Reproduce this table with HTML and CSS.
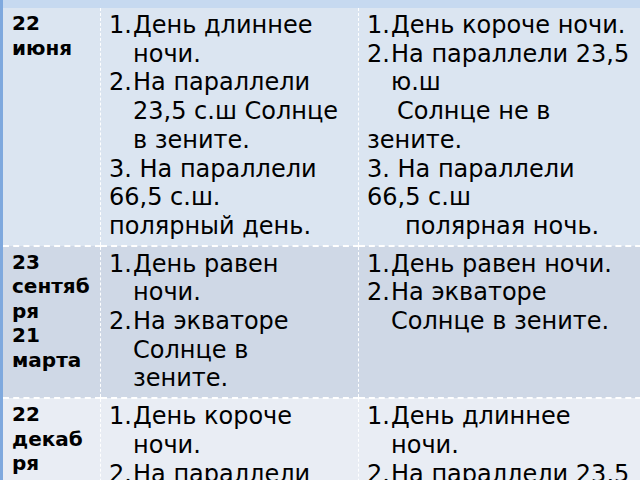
FILE: index.html
```html
<!DOCTYPE html>
<html lang="ru">
<head>
<meta charset="utf-8">
<title>Таблица</title>
<link rel="stylesheet" href="styles.css">
</head>
<body>
<div class="slide">
  <table class="grid">
    <tr class="r1">
      <td class="date"><p class="d">22 июня</p></td>
      <td class="c2">
        <ol class="list">
          <li><span class="n">1.</span><span>День длиннее ночи.</span></li>
          <li><span class="n">2.</span><span>На параллели 23,5 с.ш Солнце в зените.</span></li>
        </ol>
        <p class="para">3. На параллели 66,5 с.ш. полярный день.</p>
      </td>
      <td class="c3">
        <ol class="list">
          <li><span class="n">1.</span><span>День короче ночи.</span></li>
          <li><span class="n">2.</span><span>На параллели 23,5 ю.ш</span></li>
        </ol>
        <p class="para indent">Солнце не в<br>зените.</p>
        <p class="para">3. На параллели<br>66,5 с.ш<span class="shift">полярная ночь.</span></p>
      </td>
    </tr>
    <tr class="r2">
      <td class="date"><p class="d">23 сентября</p><p class="d">21 марта</p></td>
      <td class="c2">
        <ol class="list">
          <li><span class="n">1.</span><span>День равен ночи.</span></li>
          <li><span class="n">2.</span><span>На экваторе Солнце в зените.</span></li>
        </ol>
      </td>
      <td class="c3">
        <ol class="list">
          <li><span class="n">1.</span><span>День равен ночи.</span></li>
          <li><span class="n">2.</span><span>На экваторе Солнце в зените.</span></li>
        </ol>
      </td>
    </tr>
    <tr class="r3">
      <td class="date"><p class="d">22 декабря</p></td>
      <td class="c2">
        <ol class="list">
          <li><span class="n">1.</span><span>День короче ночи.</span></li>
          <li><span class="n">2.</span><span>На параллели 23,5 ю.ш Солнце в зените.</span></li>
        </ol>
        <p class="para">3. На параллели 66,5 ю.ш. полярный день.</p>
      </td>
      <td class="c3">
        <ol class="list">
          <li><span class="n">1.</span><span>День длиннее ночи.</span></li>
          <li><span class="n">2.</span><span>На параллели 23,5 с.ш Солнце не в зените.</span></li>
        </ol>
        <p class="para">3. На параллели 66,5 с.ш полярная ночь.</p>
      </td>
    </tr>
  </table>
</div>
</body>
</html>
```

FILE: styles.css
```css
html, body {
  margin: 0;
  padding: 0;
  width: 640px;
  height: 480px;
  overflow: hidden;
  background: #c6d9f0;
}

.slide {
  border-left: 3px solid #7fa9de;
  padding-top: 8px;
  height: 472px;
  font-family: "DejaVu Sans", sans-serif;
  color: #000;
}

.grid {
  border-collapse: collapse;
  table-layout: fixed;
  width: 647px;
}

.grid td {
  vertical-align: top;
  padding: 3px 8px 4px 8px;
  border-right: 1px dashed #ffffff;
  border-bottom: 2px dashed #ffffff;
}

.r1 td { background: #dbe5f1; }
.r2 td { background: #cfd8e6; }
.r3 td { background: #e9edf4; }

.date {
  width: 80px;
  padding-left: 9px !important;
  padding-right: 8px !important;
  font-weight: bold;
  font-size: 20px;
  line-height: 24.5px;
  overflow-wrap: anywhere;
}

.d { margin: 0; }

.c2 { width: 241px; }
.c3 { width: 275px; }

.list {
  list-style: none;
  margin: 0;
  padding: 0;
  font-size: 24px;
  line-height: 28.7px;
}

.list li {
  display: grid;
  grid-template-columns: 24px 1fr;
}

.para {
  margin: 0;
  font-size: 24px;
  line-height: 28.7px;
}

.indent { text-indent: 30px; }

.shift {
  display: block;
  padding-left: 38px;
}
```
